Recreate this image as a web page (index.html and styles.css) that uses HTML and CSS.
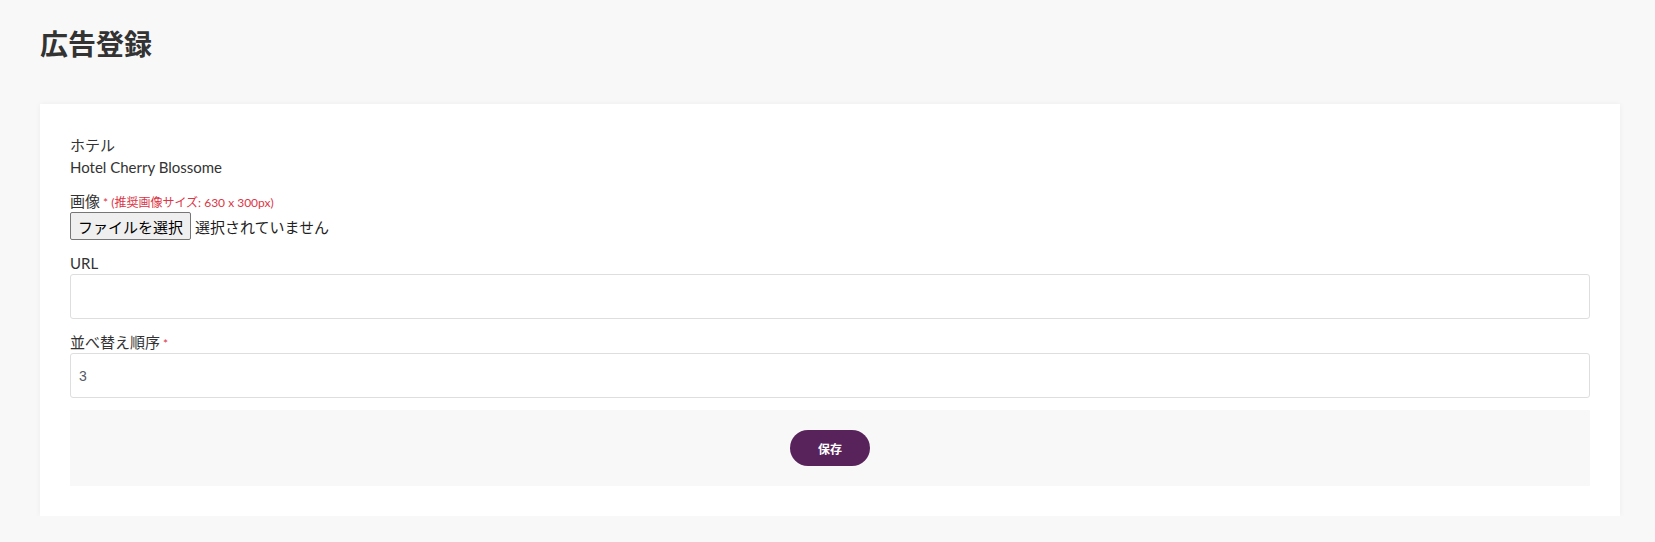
FILE: index.html
```html
<!DOCTYPE html>
<html lang="ja">
<head>
<meta charset="utf-8">
<title>広告登録</title>
<link rel="stylesheet" href="styles.css">
</head>
<body>
<div class="page">
  <h1 class="title">広告登録</h1>
  <div class="card">
    <div class="group">
      <div class="label">ホテル</div>
      <div class="value">Hotel Cherry Blossome</div>
    </div>
    <div class="group">
      <div class="label">画像<span class="req"> * (推奨画像サイズ: 630 x 300px)</span></div>
      <div class="file">
        <span class="file-btn">ファイルを選択</span>
        <span class="file-text">選択されていません</span>
      </div>
    </div>
    <div class="group">
      <div class="label">URL</div>
      <div class="input"></div>
    </div>
    <div class="group">
      <div class="label">並べ替え順序<span class="req star"> *</span></div>
      <div class="input">3</div>
    </div>
    <div class="footer">
      <span class="save">保存</span>
    </div>
  </div>
</div>
</body>
</html>
```

FILE: styles.css
```css
html, body {
  margin: 0;
  padding: 0;
  background: #f8f8f8;
}
body {
  font-family: Lato, "Noto Sans CJK JP", sans-serif;
  color: #333333;
}
.page {
  padding: 27px 35px 0 40px;
}
.title {
  margin: 0 0 43px 0;
  font-size: 28px;
  line-height: 34px;
  font-weight: 700;
  color: #333333;
}
.card {
  background: #ffffff;
  padding: 30px;
  box-shadow: 0 0 6px rgba(0, 0, 0, 0.05);
}
.group {
  margin-bottom: 12px;
}
.label {
  height: 22px;
  font-size: 15px;
  line-height: 22px;
  color: #333333;
}
.value {
  height: 22px;
  font-size: 15px;
  line-height: 22px;
  color: #333333;
}
.req {
  font-size: 12px;
  line-height: 1;
  color: #dc3545;
}
.star {
  font-size: 12px;
}
.file {
  display: flex;
  align-items: center;
  height: 28px;
  font-family: "Noto Sans CJK JP", sans-serif;
  font-size: 15px;
  color: #1f1f1f;
}
.file-btn {
  box-sizing: border-box;
  height: 28px;
  width: 121px;
  display: flex;
  align-items: center;
  justify-content: center;
  background: #efefef;
  border: 1px solid #767676;
  border-radius: 2px;
  color: #000000;
}
.file-text {
  margin-left: 4px;
}
.input {
  box-sizing: border-box;
  height: 45px;
  border: 1px solid #dedede;
  border-radius: 3px;
  padding: 0 8px;
  display: flex;
  align-items: center;
  font-family: "Liberation Sans", Arial, sans-serif;
  font-size: 14px;
  color: #555a66;
}
.footer {
  background: #f8f8f8;
  padding: 20px 0;
  display: flex;
  justify-content: center;
}
.save {
  width: 80px;
  height: 36px;
  border-radius: 18px;
  background: #58235b;
  color: #ffffff;
  font-family: "Noto Sans CJK JP", sans-serif;
  font-weight: 700;
  font-size: 12px;
  display: flex;
  align-items: center;
  justify-content: center;
}
```
